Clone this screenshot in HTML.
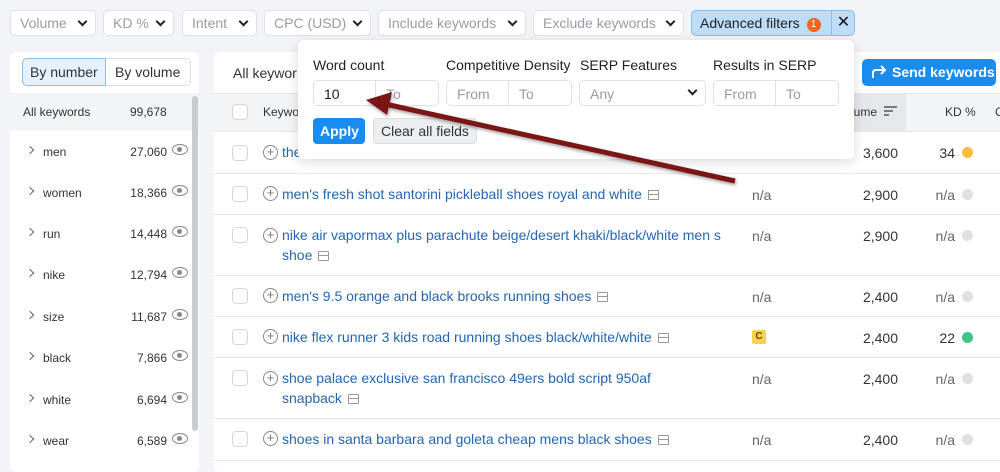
<!DOCTYPE html><html><head><style>
*{box-sizing:border-box;margin:0;padding:0}
body{width:1000px;height:471px;overflow:hidden;background:#f3f4f8;font-family:"Liberation Sans",sans-serif;font-size:13px;color:#333;position:relative}
.a{position:absolute}
.f{position:absolute;top:10px;height:26px;border:1px solid #dfe1e6;background:#fff;border-radius:5px;color:#9a9ca4;font-size:14px;padding:4px 0 0 9px}
.chev{position:absolute;right:9px;top:7px;width:7px;height:7px;border-right:2px solid #222;border-bottom:2px solid #222;transform:rotate(45deg)}
.lp{left:10px;top:52px;width:189px;height:420px;background:#fff;border-radius:6px}
.mp{left:214px;top:52px;width:790px;height:420px;background:#fff;border-radius:6px}
.lr{position:absolute;left:0;width:189px;height:41px;font-size:12px;color:#333}
.lr .n{position:absolute;left:33px;top:14px}
.lr .c{position:absolute;left:100px;top:14px;width:57px;text-align:right}
.lr .g{position:absolute;left:17px;top:16px;width:6px;height:6px;border-right:1.5px solid #666;border-top:1.5px solid #666;transform:rotate(45deg)}
.eye{position:absolute;left:162px;top:13px;width:16px;height:11px;border:1.5px solid #888;border-radius:50%/50%}
.eye:after{content:"";position:absolute;left:4px;top:1.5px;width:5px;height:5px;background:#888;border-radius:50%}
.row{position:absolute;left:214px;width:786px;border-top:1px solid #e6e7ea}
.cb{position:absolute;left:232px;width:16px;height:16px;border:1px solid #d4d6db;border-radius:4px;background:#fff}
.pl{position:absolute;left:263px;width:15px;height:15px;border:1.5px solid #888;border-radius:50%;color:#777;font-size:13px;line-height:11px;text-align:center}
.kw{position:absolute;left:282px;color:#2466b0;font-size:14px;line-height:20px}
.ic{display:inline-block;width:11px;height:10px;border:1.3px solid #999;border-radius:1px;margin-left:6px;vertical-align:-1px;background:linear-gradient(#999,#999) 0 3px/100% 1.3px no-repeat}
.na{position:absolute;left:752px;color:#666;font-size:14px}
.vol{position:absolute;left:840px;width:58px;text-align:right;font-size:14px;color:#333}
.kd{position:absolute;left:920px;width:35px;text-align:right;font-size:14px;color:#333}
.dot{position:absolute;left:962px;width:11px;height:11px;border-radius:50%;background:#dfe0e4}
.inp{position:absolute;height:26px;border:1px solid #dfe1e6;border-radius:5px;background:#fff;font-size:14px;color:#9a9ca4;padding:5px 0 0 10px}
.lab{position:absolute;top:57px;font-size:14px;color:#222}
</style></head><body>
<div class="f" style="left:10px;width:86px">Volume<span class="chev"></span></div>
<div class="f" style="left:103px;width:71px">KD %<span class="chev"></span></div>
<div class="f" style="left:182px;width:75px">Intent<span class="chev"></span></div>
<div class="f" style="left:264px;width:107px">CPC (USD)<span class="chev"></span></div>
<div class="f" style="left:378px;width:148px">Include keywords<span class="chev"></span></div>
<div class="f" style="left:533px;width:151px">Exclude keywords<span class="chev"></span></div>
<div class="f" style="left:691px;width:164px;background:#bcdcf7;border-color:#8bbde9;color:#222;padding-left:8px">Advanced filters <span style="display:inline-block;width:14px;height:14px;background:#f26522;border-radius:50%;color:#fff;font-size:10px;text-align:center;line-height:14px;vertical-align:1px;margin-left:3px">1</span><span class="a" style="left:139px;top:0;height:24px;border-left:1px solid #8bbde9;width:24px;text-align:center;font-size:16px;line-height:23px;color:#111">✕</span></div>

<div class="a lp"></div>
<div class="a" style="left:22px;top:58px;width:169px;height:28px;border:1px solid #d9dce2;border-radius:5px;background:#fff"></div>
<div class="a" style="left:22px;top:58px;width:84px;height:28px;border:1px solid #8bbde9;border-radius:5px 0 0 5px;background:#e5f1fc;font-size:14px;padding:5px 0 0 7px">By number</div>
<div class="a" style="left:115px;top:64px;font-size:14px">By volume</div>
<div class="a" style="left:10px;top:93px;width:189px;height:37px;background:#f3f4f6"></div>
<div class="a" style="left:23px;top:105px;font-size:12px">All keywords</div>
<div class="a" style="left:130px;top:105px;font-size:12px">99,678</div>
<div class="a" style="left:192px;top:96px;width:6px;height:335px;background:#c9cbd0;border-radius:3px"></div>
<div class="a" style="left:10px;top:0;width:189px">
<div class="lr" style="top:131px"><span class="g"></span><span class="n">men</span><span class="c">27,060</span><span class="eye"></span></div>
<div class="lr" style="top:172px"><span class="g"></span><span class="n">women</span><span class="c">18,366</span><span class="eye"></span></div>
<div class="lr" style="top:213px"><span class="g"></span><span class="n">run</span><span class="c">14,448</span><span class="eye"></span></div>
<div class="lr" style="top:254px"><span class="g"></span><span class="n">nike</span><span class="c">12,794</span><span class="eye"></span></div>
<div class="lr" style="top:296px"><span class="g"></span><span class="n">size</span><span class="c">11,687</span><span class="eye"></span></div>
<div class="lr" style="top:337px"><span class="g"></span><span class="n">black</span><span class="c">7,866</span><span class="eye"></span></div>
<div class="lr" style="top:379px"><span class="g"></span><span class="n">white</span><span class="c">6,694</span><span class="eye"></span></div>
<div class="lr" style="top:420px"><span class="g"></span><span class="n">wear</span><span class="c">6,589</span><span class="eye"></span></div>
</div>

<div class="a mp"></div>
<div class="a" style="left:233px;top:65px;font-size:14px">All keywor</div>
<div class="a" style="left:862px;top:59px;width:134px;height:27px;background:#1a8cf0;border-radius:5px;color:#fff;font-size:14px;font-weight:bold;padding:5px 0 0 30px">Send keywords<svg class="a" style="left:9px;top:6px" width="16" height="14" viewBox="0 0 16 14"><path d="M2 13V8q0-3 3-3h9M10 1l4 4-4 4" fill="none" stroke="#fff" stroke-width="2"/></svg></div>
<div class="a" style="left:214px;top:93px;width:786px;height:38px;background:#f3f4f6;border-top:1px solid #e6e7ea"></div>
<div class="a" style="left:820px;top:93px;width:86px;height:38px;background:#e6e7eb"></div>
<div class="cb" style="top:104px"></div>
<div class="a" style="left:263px;top:105px;font-size:12px">Keywo</div>
<div class="a" style="left:851px;top:105px;font-size:12px">lume</div>
<svg class="a" style="left:884px;top:106px" width="14" height="11"><path d="M0 1h13M0 5h9M0 9h5" stroke="#555" stroke-width="1.6"/></svg>
<div class="a" style="left:945px;top:105px;font-size:12px">KD %</div>
<div class="a" style="left:995px;top:105px;font-size:12px">C</div>

<div class="row" style="top:131px"></div><div class="row" style="top:173px"></div><div class="row" style="top:214px"></div><div class="row" style="top:275px"></div><div class="row" style="top:316px"></div><div class="row" style="top:357px"></div><div class="row" style="top:418px"></div><div class="row" style="top:460px"></div>

<div class="cb" style="top:145px"></div><div class="pl" style="top:145px">+</div><div class="kw" style="top:142px">the</div><div class="vol" style="top:145px">3,600</div><div class="kd" style="top:145px">34</div><div class="dot" style="top:147px;background:#f7be3c"></div>
<div class="cb" style="top:186px"></div><div class="pl" style="top:186px">+</div><div class="kw" style="top:184px">men's fresh shot santorini pickleball shoes royal and white<span class="ic"></span></div><div class="na" style="top:187px">n/a</div><div class="vol" style="top:187px">2,900</div><div class="kd" style="top:187px;color:#666">n/a</div><div class="dot" style="top:189px"></div>
<div class="cb" style="top:227px"></div><div class="pl" style="top:228px">+</div><div class="kw" style="top:225px;width:450px">nike air vapormax plus parachute beige/desert khaki/black/white men s shoe<span class="ic"></span></div><div class="na" style="top:228px">n/a</div><div class="vol" style="top:228px">2,900</div><div class="kd" style="top:228px;color:#666">n/a</div><div class="dot" style="top:230px"></div>
<div class="cb" style="top:288px"></div><div class="pl" style="top:288px">+</div><div class="kw" style="top:286px">men's 9.5 orange and black brooks running shoes<span class="ic"></span></div><div class="na" style="top:289px">n/a</div><div class="vol" style="top:289px">2,400</div><div class="kd" style="top:289px;color:#666">n/a</div><div class="dot" style="top:291px"></div>
<div class="cb" style="top:329px"></div><div class="pl" style="top:329px">+</div><div class="kw" style="top:327px">nike flex runner 3 kids road running shoes black/white/white<span class="ic"></span></div><div class="a" style="left:752px;top:330px;width:14px;height:14px;background:#f8d24a;border-radius:2px;font-size:10px;font-weight:bold;text-align:center;line-height:14px;color:#6b4d00">C</div><div class="vol" style="top:330px">2,400</div><div class="kd" style="top:330px">22</div><div class="dot" style="top:332px;background:#3ec48a"></div>
<div class="cb" style="top:370px"></div><div class="pl" style="top:371px">+</div><div class="kw" style="top:368px;width:420px">shoe palace exclusive san francisco 49ers bold script 950af snapback<span class="ic"></span></div><div class="na" style="top:371px">n/a</div><div class="vol" style="top:371px">2,400</div><div class="kd" style="top:371px;color:#666">n/a</div><div class="dot" style="top:373px"></div>
<div class="cb" style="top:431px"></div><div class="pl" style="top:431px">+</div><div class="kw" style="top:429px">shoes in santa barbara and goleta cheap mens black shoes<span class="ic"></span></div><div class="na" style="top:432px">n/a</div><div class="vol" style="top:432px">2,400</div><div class="kd" style="top:432px;color:#666">n/a</div><div class="dot" style="top:434px"></div>

<div class="a" style="left:298px;top:40px;width:556px;height:119px;background:#fff;border-radius:6px;box-shadow:0 3px 12px rgba(0,0,0,.15)"></div>
<div class="lab" style="left:313px">Word count</div>
<div class="lab" style="left:446px">Competitive Density</div>
<div class="lab" style="left:580px">SERP Features</div>
<div class="lab" style="left:713px">Results in SERP</div>
<div class="inp" style="left:313px;top:80px;width:63px;color:#222;border-radius:5px 0 0 5px">10</div>
<div class="inp" style="left:375px;top:80px;width:64px;border-radius:0 5px 5px 0">To</div>
<div class="inp" style="left:446px;top:80px;width:63px;border-radius:5px 0 0 5px">From</div>
<div class="inp" style="left:508px;top:80px;width:64px;border-radius:0 5px 5px 0">To</div>
<div class="inp" style="left:579px;top:80px;width:127px">Any<span class="chev" style="top:6px"></span></div>
<div class="inp" style="left:713px;top:80px;width:63px;border-radius:5px 0 0 5px">From</div>
<div class="inp" style="left:775px;top:80px;width:64px;border-radius:0 5px 5px 0">To</div>
<div class="a" style="left:313px;top:118px;width:52px;height:26px;background:#1a8cf0;border-radius:4px;color:#fff;font-weight:bold;font-size:14px;padding:5px 0 0 7px">Apply</div>
<div class="a" style="left:373px;top:118px;width:104px;height:26px;background:#eceef1;border:1px solid #dcdee2;border-radius:4px;font-size:14px;padding:4px 0 0 7px;color:#333">Clear all fields</div>

<svg class="a" style="left:0;top:0" width="1000" height="471"><defs><filter id="s"><feDropShadow dx="1" dy="2" stdDeviation="1.5" flood-opacity=".35"/></filter></defs><g filter="url(#s)"><path d="M735 181L385 104" stroke="#7a1515" stroke-width="5" fill="none"/><path d="M366 100L392 92L387 115Z" fill="#7a1515"/></g></svg>
</body></html>
